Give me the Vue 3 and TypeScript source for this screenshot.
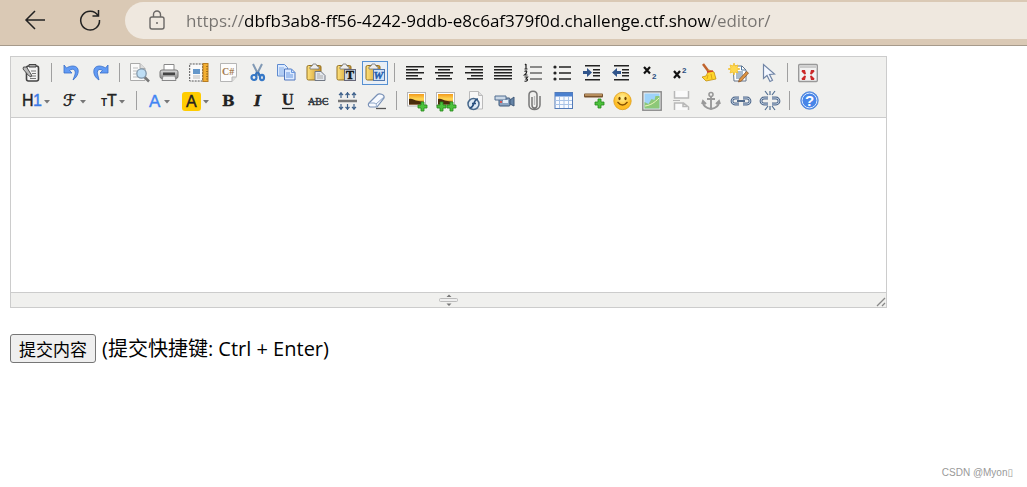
<script setup lang="ts">
import { ref } from 'vue'

interface Tool {
  label: string
  art: string
  wide?: boolean
  active?: boolean
}
interface Group {
  size: string
  tools: Tool[]
}

const address = ref('https://dbfb3ab8-ff56-4242-9ddb-e8c6af379f0d.challenge.ctf.show/editor/')
const content = ref('')

const caret = (x: number): string => `<path d="M${x} 9h6l-3 3.500z" fill="#777"/>`
const plus = (x: number, y: number): string =>
  `<path d="M${x - 1} ${y - 4}h3v3h3v3h-3v3h-3v-3h-3v-3h3z" fill="#4cc23c" stroke="#23891b" stroke-width=".8"/>`
const photo =
  '<rect x=".5" y="1.500" width="18" height="13.500" fill="#fff" stroke="#b5b5b5"/><rect x="2" y="3" width="15" height="10.500" fill="url(#sunset)"/><path d="M2 8c3-1 5 1 7 1.500l8 1.500v2.500H2z" fill="#4a2c0c"/>'
const pasteBase =
  '<rect x="1" y="2.500" width="14" height="14.500" rx="1.500" fill="url(#gold)" stroke="#947020"/><path d="M4 6V4l2-1 1-2h3l1 2 2 1v2z" fill="#eee" stroke="#777" stroke-width=".8"/>'
const bars = (lines: number[][]): string =>
  lines.map(([x, w], i) => `<rect x="${x}" y="${3 + i * 3}" width="${w}" height="1.500"/>`).join('')
const indentBars =
  '<path d="M3 2.800h15M11 6.800h7M11 9.800h7M11 12.800h7M3 16.800h15" stroke="#222" stroke-width="1.600"/>'
const chain =
  '<path d="M8 7H4a3 3 0 0 0 0 6h4M12 7h4a3 3 0 0 1 0 6h-4" fill="none" stroke="#50698c" stroke-width="2.800"/><path d="M8 7H4a3 3 0 0 0 0 6h4M12 7h4a3 3 0 0 1 0 6h-4" fill="none" stroke="#b8c8db" stroke-width="1"/>'

const rowOne: Group[] = [
  {
    size: 'single',
    tools: [
      {
        label: 'HTML代码',
        art: '<rect x="4.500" y="3" width="12" height="15" rx="2" fill="#f4f4f4" stroke="#444" stroke-width="1.600"/><path d="M7 4V1.500h7v2.500z" fill="#aaa" stroke="#444"/><path d="M9 8h5M10 10.500h4M8 13h6M8 15.500h6" stroke="#777"/><path d="M1.500 4h3l5 8-.5 2-2.500-1.500L1 6z" fill="#bbb" stroke="#444" stroke-width=".9"/>',
      },
    ],
  },
  {
    size: 'pair',
    tools: [
      {
        label: '后退',
        art: '<path d="M2 2v8h8L7.500 7.500C11 4.500 15 7 12.500 13L11 17c7-5 7-14 0-14-3 0-5 1-6.500 2z" fill="#629bf5" stroke="#386ec9" stroke-width=".8"/>',
      },
      {
        label: '前进',
        art: '<path d="M17 2v8H9l2.500-2.500C8 5 5 7 7 13l1 4C1 13 1 3 8 3c3 0 5 1 6.500 2z" fill="#629bf5" stroke="#386ec9" stroke-width=".8"/>',
      },
    ],
  },
  {
    size: 'clipboard',
    tools: [
      {
        label: '预览',
        art: '<path d="M.5.500h9.500l5 5v12H.5z" fill="#fafafa" stroke="#aaa"/><path d="M10 .5v5h5" fill="#ddd" stroke="#aaa"/><path d="M3 5h5M3 8h4M3 11h3M3 14h6" stroke="#bbb"/><path d="M14 13.500l5 5" stroke="#777" stroke-width="2.500"/><circle cx="11.500" cy="10.500" r="4.700" fill="#bedef5" stroke="#8297aa" stroke-width="1.300"/>',
      },
      {
        label: '打印',
        art: '<path d="M5 8V1.500h10V8" fill="#fff" stroke="#888"/><rect x="1" y="7" width="18" height="8.500" rx="2" fill="url(#metal)" stroke="#777"/><path d="M4 9.500h12v2.500H4z" fill="#444"/><path d="M4 13h12l1 4.500H3z" fill="#eee" stroke="#888"/>',
      },
      {
        label: '插入模板',
        art: '<rect x=".7" y="1" width="13" height="17" fill="#fafafa" stroke="#555" stroke-dasharray="2 1"/><rect x="4" y="6" width="7" height="5" fill="#6497ca"/><path d="M4 13h7M4 15h7" stroke="#bbb"/><rect x="14" y=".5" width="5" height="18" fill="#f3af32" stroke="#b87d22"/><path d="M17 3.500h2M17 6h2M17 8.500h2M17 11h2M17 13.500h2M17 16h2" stroke="#8b5b13" stroke-width=".7"/>',
      },
      {
        label: '插入程序代码',
        art: '<path d="M2.500.500h16v13l-4.500 5H2.500z" fill="#fcfcfc" stroke="#b5b5b5"/><path d="M14 18.500v-4.500h4.500" fill="#ddd" stroke="#b5b5b5"/><text x="4" y="12" font-family="Liberation Serif, serif" font-size="10" font-weight="bold" fill="#a57c52">C#</text>',
      },
      {
        label: '剪切',
        art: '<path d="M6 1l6 12M15 1L9 13" stroke="#8199b5" stroke-width="2"/><path d="M11 9l2 4M10 9l-2 4" stroke="#3471ba" stroke-width="2"/><circle cx="7" cy="14.500" r="2.500" fill="none" stroke="#3678c7" stroke-width="2.200"/><ellipse cx="15" cy="14.500" rx="2" ry="2.700" fill="none" stroke="#3678c7" stroke-width="2.200"/>',
      },
      {
        label: '复制',
        art: '<path d="M.5 1.500h7l3 3v8.500H.5z" fill="#dceaff" stroke="#5e8bd0"/><path d="M2 5h5M2 7h6M2 9h5M2 11h5" stroke="#86aee6"/><path d="M7.500 6h7l3.500 3.500V17H7.500z" fill="#dceaff" stroke="#5077bd"/><path d="M14.500 6v3.500H18M9 10h4M9 12h7M9 14h7" fill="none" stroke="#6a98df"/>',
      },
      {
        label: '粘贴',
        art: pasteBase + '<path d="M9 8.500h6l4 4v5H9z" fill="#e4e8ee" stroke="#707783"/><path d="M11 11h3M11 13h6M11 15h6" stroke="#aaa"/>',
      },
      {
        label: '粘贴为无格式文本',
        art: pasteBase + '<rect x="8.500" y="6.500" width="11" height="11" fill="#cbd7e3" stroke="#667"/><text x="10" y="16" font-family="Liberation Serif, serif" font-size="12" font-weight="bold" fill="#111" stroke="#111" stroke-width=".5">T</text>',
      },
      {
        label: '从Word粘贴',
        active: true,
        art: pasteBase + '<rect x="8.500" y="6.500" width="11" height="11" fill="#d3e3f7" stroke="#5277ac"/><text x="8.500" y="16" font-family="Liberation Serif, serif" font-size="11" font-weight="bold" font-style="italic" fill="#235daf" stroke="#235daf" stroke-width=".4">W</text>',
      },
    ],
  },
  {
    size: 'long',
    tools: [
      { label: '左对齐', art: bars([[1, 18], [1, 12], [1, 18], [1, 12], [1, 16]]) },
      { label: '居中', art: bars([[1, 18], [4, 12], [1, 18], [4, 12], [2, 16]]) },
      { label: '右对齐', art: bars([[1, 18], [7, 12], [1, 18], [7, 12], [3, 16]]) },
      { label: '两端对齐', art: bars([[1, 18], [1, 18], [1, 18], [1, 18], [1, 18]]) },
      {
        label: '编号',
        art: '<path d="M7 4h12M7 10h12M7 16h12M3 1v5M2 2l1-1M1.500 6h3M1.500 8.500c3-2 3 1 0 3.500h3M1.500 14h3l-1.500 2c3 0 1 3-1.500 2" fill="none" stroke="#222" stroke-width="1.200"/>',
      },
      {
        label: '项目符号',
        art: '<path d="M7 4h12M7 10h12M7 16h12" stroke="#222" stroke-width="1.400"/><circle cx="3" cy="4" r="1.600"/><circle cx="3" cy="10" r="1.600"/><circle cx="3" cy="16" r="1.600"/>',
      },
      { label: '增加缩进', art: indentBars + '<path d="M1 8h4V5l5 4.500L5 14v-3H1z" fill="#31558b"/>' },
      { label: '减少缩进', art: indentBars + '<path d="M10 8H6V5L1 9.500 6 14v-3h4z" fill="#31558b"/>' },
      {
        label: '下标',
        art: '<path d="M4 4l6 6.500M10 4l-6 6.500" stroke="#111" stroke-width="2.200"/><text x="12" y="16" font-family="Liberation Sans, sans-serif" font-size="8" font-weight="bold" fill="#2b4b7c">2</text>',
      },
      {
        label: '上标',
        art: '<path d="M4 8l6 7M10 8l-6 7" stroke="#111" stroke-width="2.200"/><text x="12" y="10" font-family="Liberation Sans, sans-serif" font-size="8" font-weight="bold" fill="#2b4b7c">2</text>',
      },
      {
        label: '一键排版',
        art: '<path d="M4 1l6 8" stroke="#c0632c" stroke-width="2.500"/><path d="M10 7l5 2 2 7-10 2-4-4 4-1z" fill="#ffd52b" stroke="#c39010" stroke-width=".8"/><path d="M8 9l6-1" stroke="#d0442b" stroke-width="1.500"/><path d="M9 12l-1 4M12 11l1 5" stroke="#d29c12" stroke-width=".8"/>',
      },
      {
        label: '快速排版',
        art: '<path d="M4 3h9l4 4v11H5z" fill="#fff" stroke="#65758a"/><path d="M12.500 3v4h4M7 9h7M7 11h7M7 13h7M7 15h5" fill="none" stroke="#52799f"/><path d="M5 0l1 3 3-1-1 3 3 1-3 1 1 3-3-1-1 3-1-3-3 1 1-3-3-1 3-1-1-3 3 1z" fill="#ffd84d" stroke="#f1bf30" stroke-width=".8"/><path d="M19.500 10l-7 8-3 1 1-3 7-7.500z" fill="#df9542" stroke="#87532a" stroke-width=".8"/>',
      },
      {
        label: '全选',
        art: '<path d="M5.500 1.500v14l3.500-3 3 6 2.500-1.300-3-5.700 5-.5z" fill="#f3f7ff" stroke="#7185a6" stroke-width="1.200"/>',
      },
    ],
  },
  {
    size: 'single',
    tools: [
      {
        label: '全屏显示',
        art: '<rect x=".7" y="1.500" width="18.600" height="17" rx="1" fill="#f2f2f2" stroke="#999" stroke-width="1.400"/><path d="M2 2.500h16v2.500H2z" fill="#ccc"/><path d="M4 7h3l1 4-1.500.5L3.500 8.500zM16 7h-3l-1 4 1.500.5 3-3zM4 17h3l1-4-1.500-.5-3 3zM16 17h-3l-1-4 1.500-.5 3 3z" fill="#cb2929"/>',
      },
    ],
  },
]

const sans = 'font-family="Liberation Sans, sans-serif"'
const serifBold = 'font-family="DejaVu Serif, serif" font-weight="bold" font-size="15" stroke="#222" stroke-width=".3"'

const rowTwo: Group[] = [
  {
    size: 'menus',
    tools: [
      { label: '段落', wide: true, art: `<text x="1" y="15" ${sans} font-size="16" stroke="#222" stroke-width=".4">H</text><text x="12" y="15" ${sans} font-size="16" fill="#3b7be8" stroke="#3b7be8" stroke-width=".4">1</text>` + caret(23) },
      { label: '字体', wide: true, art: '<text x="4" y="15" font-family="DejaVu Sans, sans-serif" font-size="16" stroke="#222" stroke-width=".5">ℱ</text>' + caret(21) },
      { label: '文字大小', wide: true, art: `<text x="3" y="15" ${sans} font-size="10" font-weight="bold">T</text><text x="9" y="15" ${sans} font-size="16" stroke="#222" stroke-width=".4">T</text>` + caret(21) },
    ],
  },
  {
    size: 'colors',
    tools: [
      { label: '文字颜色', wide: true, art: `<text x="4" y="16" ${sans} font-size="17" fill="#4285f4" stroke="#4285f4" stroke-width=".4">A</text>` + caret(19) },
      { label: '文字背景', wide: true, art: `<rect x="1" y="1" width="19" height="19" rx="3" fill="#fc0"/><text x="5" y="16" ${sans} font-size="16" stroke="#222" stroke-width=".4">A</text>` + caret(22) },
    ],
  },
  {
    size: 'styles',
    tools: [
      { label: '粗体', art: `<text x="3" y="15" ${serifBold}>B</text>` },
      { label: '斜体', art: `<text x="5" y="15" ${serifBold} font-style="italic">I</text>` },
      { label: '下划线', art: '<text x="4" y="14" font-family="Liberation Serif, serif" font-weight="bold" font-size="16" stroke="#222" stroke-width=".3">U</text><path d="M4 17.500h12" stroke="#222" stroke-width="1.300"/>' },
      { label: '删除线', art: '<text x="0" y="14" font-family="Liberation Serif, serif" font-size="10" stroke="#222" stroke-width=".3">ABC</text><path d="M0 10.500h20" stroke="#435064" stroke-width="1.200"/>' },
      { label: '行距', art: '<path d="M0 10h19" stroke="#777" stroke-width="2.500"/><path d="M3 1v6M1 4l2-2 2 2M9.500 1v6M7.500 4l2-2 2 2M16 1v6M14 4l2-2 2 2M3 13v6M1 16l2 2 2-2M9.500 13v6M7.500 16l2 2 2-2M16 13v6M14 16l2 2 2-2" fill="none" stroke="#3e618b" stroke-width="1.200"/>' },
      { label: '删除格式', art: '<path d="M9 17.500h10" stroke="#555" stroke-width="1.300"/><path d="M2 12l8-8c2-2 8-1 7 3l-7 9H3c-2-1-2-3-1-4z" fill="#f7faff" stroke="#7890b5" stroke-width="1.200"/><path d="M2 12h5c2 0 3 2 2 4M9 13l8-7" fill="none" stroke="#8ca4c6"/>' },
    ],
  },
  {
    size: 'long',
    tools: [
      { label: '图片', art: photo + plus(15, 15) },
      { label: '批量图片上传', art: photo + plus(5, 15) + plus(15, 15) },
      { label: 'Flash', art: '<path d="M3.500.500h9l4 4V18h-13z" fill="#f7f7f7" stroke="#bbb"/><path d="M12.500.500v4h4" fill="#ddd" stroke="#bbb"/><circle cx="7.500" cy="13" r="5.500" fill="#dce8f4" stroke="#48698c" stroke-width="1.500"/><path d="M12 8c-5 0-3 8-8 9M6 12.500h4" fill="none" stroke="#274f7e" stroke-width="1.700"/>' },
      { label: '视音频', art: '<rect x="4" y="7" width="11" height="8" rx="1" fill="#8ca5c2" stroke="#3e5878"/><path d="M0 5h11v4H0z" fill="#cbd8e6" stroke="#526f91"/><path d="M15 9l4-3v9l-4-2z" fill="#6684a6" stroke="#3e5878"/><rect x="8" y="9" width="5" height="3" fill="#e4eef7"/><circle cx="6" cy="11" r="1" fill="#e73c32"/>' },
      { label: '插入文件', art: '<path d="M7 6v8c0 4 5 4 5 0V4c0-5-8-5-8 0v10c0 6 11 6 11 0V5" fill="none" stroke="#777" stroke-width="1.500"/><path d="M9.500 5v9" stroke="#bbb" stroke-width="1.300"/>' },
      { label: '表格', art: '<rect x="1" y="1.500" width="17.500" height="16" fill="#f7faff" stroke="#527bb9"/><path d="M1 2h17.500v3.500H1z" fill="#4a80cf"/><path d="M1 9.500h17M1 13.500h17M5.500 6v11M10 6v11M14.500 6v11" stroke="#a8c3e7"/>' },
      { label: '插入横线', art: '<rect x="0" y="2.500" width="19" height="4" rx="1" fill="#79522c"/><path d="M1 4h17" stroke="#dfb67f" stroke-width="1.200"/>' + plus(15, 12) },
      { label: '插入表情', art: '<circle cx="9.500" cy="10" r="8.700" fill="url(#smile)" stroke="#dda021" stroke-width=".8"/><ellipse cx="6.500" cy="7.500" rx="1.100" ry="1.700" fill="#704300"/><ellipse cx="12.500" cy="7.500" rx="1.100" ry="1.700" fill="#704300"/><path d="M4.500 11q5 6 10 0" fill="none" stroke="#855000" stroke-width="1.300"/>' },
      { label: '百度地图', art: '<rect x=".8" y=".8" width="18.400" height="18.400" fill="#eee" stroke="#888" stroke-width="1.400"/><rect x="2.500" y="2.500" width="15" height="15" fill="#9ed3fa"/><path d="M2.500 11l4 2 3-5 3 1 1-4h4v12.500h-15z" fill="#8dc878"/><path d="M3 15c6-1 9-3 14-8" fill="none" stroke="#eff7c0"/>' },
      { label: '插入分页符', art: '<path d="M2.500 0v7h14V0M2.500 19v-7h9l5 4v3M11 12v3.500h4" fill="#fafafa" stroke="#b8b8b8" stroke-width="1.500"/><path d="M1 9.500h7" stroke="#b8b8b8"/>' },
      { label: '锚点', art: '<circle cx="10" cy="3.500" r="2" fill="none" stroke="#999" stroke-width="1.600"/><path d="M10 5.500V18M6 8h8M2 11c0 4 3 6 8 7 5-1 8-3 8-7M1 13l1-3 3 3M15 13l3-3 1 3" fill="none" stroke="#999" stroke-width="1.900"/>' },
      { label: '超级链接', art: chain + '<path d="M6 10h8" stroke="#526b8c" stroke-width="2"/>' },
      { label: '取消超级链接', art: chain + '<path d="M5 0l3 4M10 0v4M15 0l-3 4M5 19l3-4M10 19v-4M15 19l-3-4" stroke="#536f92" stroke-width="1.200"/>' },
    ],
  },
  {
    size: 'single',
    tools: [
      { label: '关于', art: `<circle cx="9.500" cy="9.500" r="8.700" fill="#4785e8" stroke="#5489db"/><circle cx="9.500" cy="9.500" r="7.400" fill="none" stroke="#d8e8ff"/><text x="5" y="15" ${sans} font-size="15" font-weight="bold" fill="#fff">?</text>` },
    ],
  },
]

const rows = [rowOne, rowTwo]
</script>

<template>
  <div class="page">
    <header class="browser">
      <button class="nav" type="button" aria-label="Back">
        <svg width="24" height="24" viewBox="0 0 24 24"><path d="M22 12H3M12 3l-9 9 9 9" /></svg>
      </button>
      <button class="nav" type="button" aria-label="Reload">
        <svg width="24" height="24" viewBox="0 0 24 24"><path d="M20 7.500A9.400 9.400 0 1 0 21.500 12M20.500 2v6h-6" /></svg>
      </button>
      <div class="address">
        <svg class="lock" width="18" height="22" viewBox="0 0 18 22">
          <rect x="2" y="7" width="14" height="12" rx="2" />
          <path d="M5.500 7V4.500a3.500 3.500 0 0 1 7 0V7" />
          <circle cx="9" cy="13" r="1" />
        </svg>
        <input v-model="address" class="url" type="text" aria-label="Address" spellcheck="false" />
      </div>
    </header>

    <main class="main">
      <svg class="defs" width="0" height="0" aria-hidden="true">
        <defs>
          <linearGradient id="gold"><stop stop-color="#ffe27b" /><stop offset="1" stop-color="#c8922a" /></linearGradient>
          <linearGradient id="metal" x2="0" y2="1"><stop stop-color="#ddd" /><stop offset="1" stop-color="#888" /></linearGradient>
          <linearGradient id="sunset" x2="0" y2="1"><stop stop-color="#f29a1c" /><stop offset=".5" stop-color="#ffd957" /><stop offset="1" stop-color="#a75110" /></linearGradient>
          <radialGradient id="smile" cy=".3"><stop stop-color="#fff29a" /><stop offset="1" stop-color="#ffbd24" /></radialGradient>
        </defs>
      </svg>

      <section class="editor">
        <div class="toolbar" role="toolbar" aria-label="编辑工具">
          <div v-for="(row, r) in rows" :key="r" class="row">
            <div v-for="(group, g) in row" :key="g" class="group" :class="group.size">
              <button
                v-for="tool in group.tools"
                :key="tool.label"
                type="button"
                class="tool"
                :class="{ active: tool.active, wide: tool.wide }"
                :aria-label="tool.label"
              >
                <svg
                  :width="tool.wide ? 30 : 20"
                  height="20"
                  :viewBox="tool.wide ? '0 0 30 20' : '0 0 20 20'"
                  v-html="tool.art"
                />
              </button>
            </div>
          </div>
        </div>
        <textarea v-model="content" class="body" aria-label="内容"></textarea>
        <div class="status">
          <svg class="grip" width="20" height="13" viewBox="0 0 20 13">
            <path d="M7.500 3L10 .5 12.500 3zM7.500 9.500h5L10 12z" fill="#777" />
            <rect x=".5" y="4.500" width="18" height="3" rx="1" fill="#eee" stroke="#bbb" />
          </svg>
          <svg class="corner" width="10" height="11" viewBox="0 0 10 11">
            <path d="M1 10l8-8M6 10l3-3" fill="none" stroke="#888" stroke-width="1.300" />
          </svg>
        </div>
      </section>

      <form class="submit" @submit.prevent>
        <button class="send" type="submit">提交内容</button>
        <span>(提交快捷键: Ctrl + Enter)</span>
      </form>
    </main>

    <footer class="mark">CSDN @Myon▯</footer>
  </div>
</template>

<style>
body {
  margin: 0;
  background: #fff;
}
</style>

<style scoped>
.page {
  display: flex;
  flex-direction: column;
  min-height: 100vh;
  color: #000;
  font-family: "Open Sans", "Noto Sans CJK SC", sans-serif;
}
.browser {
  display: flex;
  align-items: flex-start;
  height: 45px;
  padding-left: 15px;
  background: #dac9b5;
  border-bottom: 1px solid #a69a8b;
}
.nav {
  width: 40px;
  height: 40px;
  margin-right: 15px;
  padding: 0;
  border: 0;
  background: none;
}
.nav svg {
  display: block;
  margin: 0 auto;
  fill: none;
  stroke: #222;
  stroke-width: 1.5;
}
.address {
  display: flex;
  flex: 1;
  align-items: center;
  height: 37px;
  margin-top: 2px;
  padding-left: 23px;
  border-radius: 19px 0 0 19px;
  background: #efe8df;
}
.lock {
  flex: none;
  margin-right: 20px;
  fill: none;
  stroke: #6b6866;
  stroke-width: 1.4;
}
.lock circle {
  fill: #6b6866;
  stroke: none;
}
.url {
  flex: 1;
  min-width: 0;
  height: 30px;
  padding: 0;
  border: 0;
  outline: 0;
  color: transparent;
  caret-color: #000;
  background: linear-gradient(90deg, #767370 57px, #000 57px, #000 524px, #767370 524px);
  background-clip: text;
  font: 17px "Open Sans", sans-serif;
}
.main {
  padding: 10px;
}
.defs {
  display: block;
}
.editor {
  margin-right: 130px;
  border: 1px solid #ccc;
}
.toolbar {
  padding: 2px 6px;
  border-bottom: 1px solid #ccc;
  background: #f0f0ee;
}
.row {
  display: flex;
  height: 28px;
}
.group {
  display: flex;
  flex: none;
}
.group + .group:not(.styles)::before {
  content: "";
  flex: none;
  width: 1px;
  height: 19px;
  margin: 4px 5px 0 4px;
  background: #a0a0a0;
}
.single .tool {
  width: 30px;
}
.pair .tool {
  width: 29px;
}
.group.pair {
  width: 68px;
}
.group.clipboard {
  width: 275px;
}
.group.long {
  width: 393px;
}
.group.menus {
  width: 115px;
}
.group.colors {
  width: 82px;
}
.group.styles {
  width: 178px;
}
.clipboard .tool,
.long .tool,
.menus .tool,
.colors .tool,
.styles .tool {
  flex: 1;
  min-width: 0;
}
.tool {
  display: flex;
  align-items: center;
  justify-content: center;
  height: 26px;
  margin-top: 1px;
  padding: 0;
  border: 0;
  background: none;
}
.tool svg {
  flex: none;
  overflow: visible;
  fill: #222;
}
.tool.active svg {
  padding: 1px 2px;
  border: 1px solid #5690d2;
  background: #e9eff6;
}
.body {
  display: block;
  box-sizing: border-box;
  width: 100%;
  height: 174px;
  padding: 5px;
  border: 0;
  outline: 0;
  resize: none;
  background: #fff;
}
.status {
  display: flex;
  align-items: flex-end;
  height: 14px;
  padding-left: 10px;
  border-top: 1px solid #ccc;
  background: #f0f0ee;
}
.grip {
  margin-left: auto;
}
.corner {
  margin-left: auto;
}
.submit {
  display: flex;
  align-items: center;
  gap: 6px;
  margin-top: 26px;
  font-size: 20px;
  line-height: 28px;
}
.send {
  height: 29px;
  padding: 0 8px;
  border: 1px solid #767676;
  border-radius: 3px;
  background: #efefef;
  color: #000;
  font: 17px "Noto Sans CJK SC", sans-serif;
}
.mark {
  margin-top: auto;
  padding: 0 14px 9px;
  color: #999;
  font: 10px "Liberation Sans", "DejaVu Sans", sans-serif;
  text-align: right;
}
</style>
